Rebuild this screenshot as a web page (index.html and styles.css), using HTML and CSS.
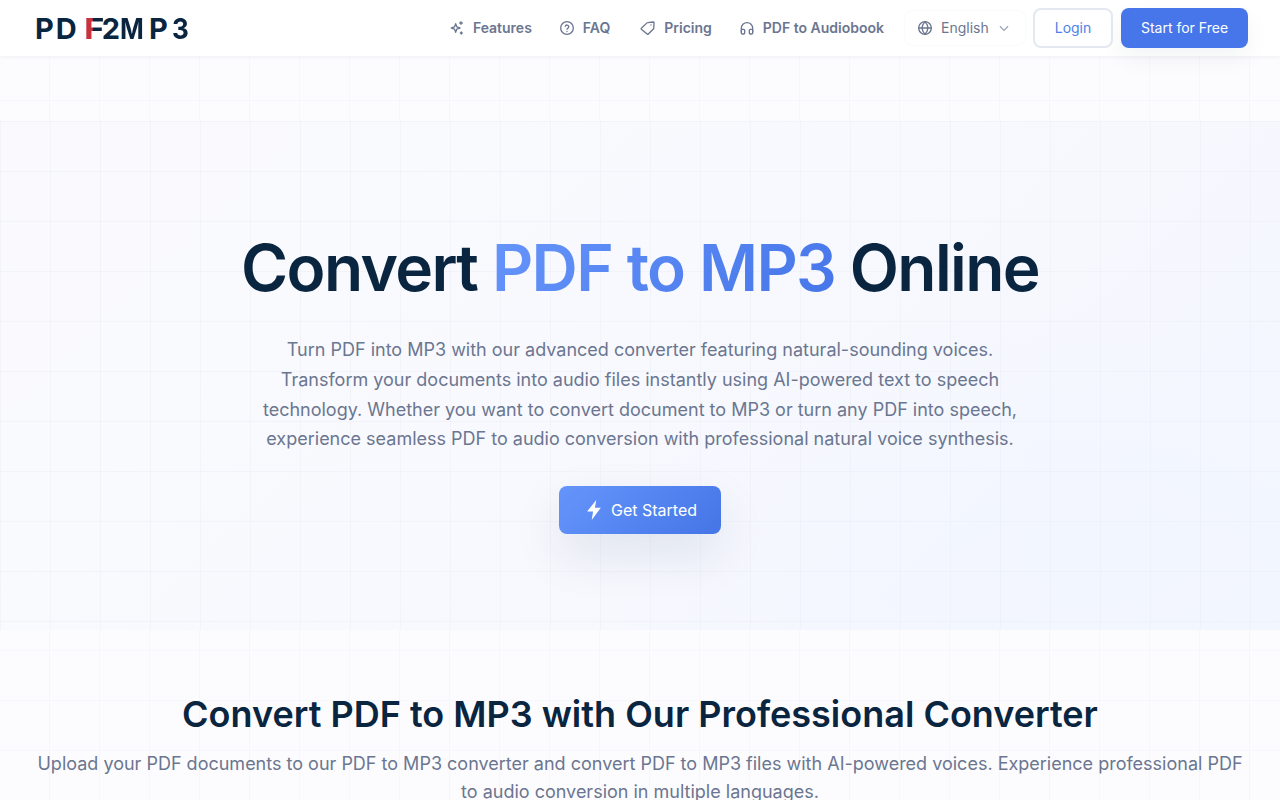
FILE: index.html
```html
<!DOCTYPE html>
<html lang="en">
<head>
  <meta charset="UTF-8" />
  <meta name="viewport" content="width=device-width, initial-scale=1.0"/>
  <title>PDF2MP3</title>
  <link rel="stylesheet" href="styles.css">
</head>
<body>
  <header class="topbar">
    <a class="logo" href="#"><span class="l-p">P</span><span class="l-d">D</span><span class="l-f">F</span><span class="l-2">2</span><span class="l-m">M</span><span class="l-p2">P</span><span class="l-3">3</span></a>
    <nav class="nav">
      <a href="#" class="nav-link">
        <svg viewBox="0 0 24 24" class="icon"><path d="M10 5.500l1.700 4.800 4.800 1.700-4.800 1.700L10 18.500l-1.700-4.800L3.500 12l4.800-1.700z"/><path d="M18 2.500v4M16 4.500h4M18.500 18v3M17 19.500h3"/></svg>
        Features
      </a>
      <a href="#" class="nav-link">
        <svg viewBox="0 0 24 24" class="icon"><circle cx="12" cy="12" r="9.500"/><path d="M9.300 9.300a2.800 2.800 0 0 1 5.400 1c0 1.800-2.700 2.300-2.700 3.700M12 17.200v.1"/></svg>
        FAQ
      </a>
      <a href="#" class="nav-link">
        <svg viewBox="0 0 24 24" class="icon"><path d="M2 12.300L10.500 4.300a1.500 1.500 0 0 1 1-.4L20 3a1 1 0 0 1 1 1l-.4 8.500a1.500 1.500 0 0 1-.5 1L12.500 21a1.300 1.300 0 0 1-1.800 0L2 13.800a1 1 0 0 1 0-1.500z"/><path d="M16.500 7.500v.1"/></svg>
        Pricing
      </a>
      <a href="#" class="nav-link">
        <svg viewBox="0 0 24 24" class="icon"><path d="M3.500 18v-5.500a8.500 8.500 0 0 1 17 0V18"/><rect x="3.500" y="14" width="5" height="7" rx="1.500"/><rect x="15.500" y="14" width="5" height="7" rx="1.500"/></svg>
        PDF to Audiobook
      </a>
      <button class="lang">
        <svg viewBox="0 0 24 24" class="icon"><circle cx="12" cy="12" r="9.500"/><path d="M2.500 12h19M12 2.500c-5.500 6-5.500 13 0 19M12 2.500c5.500 6 5.500 13 0 19"/></svg>
        <span>English</span>
        <svg viewBox="0 0 24 24" class="chev"><path d="M5 9l7 7 7-7"/></svg>
      </button>
      <a href="#" class="btn-login">Login</a>
      <a href="#" class="btn-start">Start for Free</a>
    </nav>
  </header>

  <section class="hero">
    <h1>Convert <span class="grad">PDF to MP3</span> Online</h1>
    <p class="hero-text">Turn PDF into MP3 with our advanced converter featuring natural-sounding voices. Transform your documents into audio files instantly using AI-powered text to speech technology. Whether you want to convert document to MP3 or turn any PDF into speech, experience seamless PDF to audio conversion with professional natural voice synthesis.</p>
    <a href="#" class="btn-get">
      <svg viewBox="0 0 24 24" class="bolt"><path d="M14.500 1L4.500 13.500H11L9.500 23 19.500 9.500H13z"/></svg>
      Get Started
    </a>
  </section>

  <section class="converter">
    <h2>Convert PDF to MP3 with Our Professional Converter</h2>
    <p>Upload your PDF documents to our PDF to MP3 converter and convert PDF to MP3 files with AI-powered voices. Experience professional PDF to audio conversion in multiple languages.</p>
  </section>
</body>
</html>
```

FILE: styles.css
```css
* {
  box-sizing: border-box;
}

body {
  margin: 0;
  font-family: 'Inter', sans-serif;
  color: #0a2540;
  background-color: #fcfcfe;
  background-image:
    linear-gradient(rgba(226, 229, 240, 0.22) 1px, transparent 1px),
    linear-gradient(90deg, rgba(226, 229, 240, 0.22) 1px, transparent 1px);
  background-size: 50px 50px;
  background-position: -1px 0;
}

a {
  text-decoration: none;
  color: inherit;
}

.topbar {
  height: 56px;
  padding: 0 32px 0 35px;
  display: flex;
  align-items: center;
  justify-content: space-between;
  background: #fff;
  box-shadow: 0 1px 4px rgba(10, 37, 64, 0.06);
  position: relative;
  z-index: 2;
}

.logo {
  display: flex;
  font-size: 29px;
  font-weight: 700;
  line-height: 1;
  color: #0a2540;
}

.logo span {
  display: inline-block;
  transform-origin: left center;
}

.l-d { margin-left: 2px; }
.l-f {
  margin-left: 7px;
  background: linear-gradient(90deg, #c8323c 0 7px, #0a2540 7px);
  -webkit-background-clip: text;
  background-clip: text;
  color: transparent;
  transform: scaleX(1.2);
}
.l-2 { margin-left: 1px; }
.logo .l-m { transform: scaleX(0.88); }
.l-p2 { margin-left: 2px; }
.logo .l-3 {
  margin-left: 4px;
  transform: scaleX(0.9);
}

.nav {
  display: flex;
  align-items: center;
  height: 40px;
  line-height: 16px;
}

.nav-link {
  display: flex;
  align-items: center;
  gap: 8px;
  margin-right: 27px;
  padding-bottom: 1px;
  font-size: 14px;
  font-weight: 600;
  color: #6b7690;
}

.nav-link:nth-child(2) { margin-right: 30px; }
.nav-link:nth-child(3) { margin-right: 27px; }
.nav-link:nth-child(4) { margin-right: 21px; }

.icon {
  width: 16px;
  height: 16px;
  fill: none;
  stroke: #6b7690;
  stroke-width: 2;
  stroke-linecap: round;
  stroke-linejoin: round;
}

.lang {
  width: 120px;
  height: 34px;
  margin-right: 8px;
  padding: 0 14px 1px 12px;
  display: flex;
  align-items: center;
  border: none;
  border-radius: 8px;
  background: #fff;
  box-shadow: 0 0 3px rgba(10, 37, 64, 0.05);
  font-family: inherit;
  font-size: 14px;
  color: #6b7690;
}

.lang span {
  margin-left: 8px;
  flex: 1;
  text-align: left;
}

.chev {
  width: 14px;
  height: 14px;
  fill: none;
  stroke: #9aa3b5;
  stroke-width: 2;
}

.btn-login {
  width: 80px;
  height: 40px;
  margin-right: 8px;
  display: flex;
  align-items: center;
  justify-content: center;
  border: 2px solid #e4e8f1;
  border-radius: 8px;
  background: #fff;
  font-size: 14px;
  color: #4f7fea;
}

.btn-start {
  width: 127px;
  height: 40px;
  display: flex;
  align-items: center;
  justify-content: center;
  border-radius: 8px;
  background: #4676ea;
  box-shadow: 0 10px 25px rgba(10, 37, 64, 0.05);
  font-size: 14px;
  color: #fff;
}

.hero {
  height: 574px;
  position: relative;
  display: flex;
  flex-direction: column;
  align-items: center;
  padding-top: 177px;
}

.hero::before {
  content: "";
  position: absolute;
  left: 0;
  right: 0;
  top: 65px;
  bottom: 0;
  background-color: #f8f9fe;
  background-image:
    linear-gradient(rgba(226, 229, 240, 0.28) 1px, transparent 1px),
    linear-gradient(90deg, rgba(226, 229, 240, 0.28) 1px, transparent 1px),
    radial-gradient(ellipse 500px 250px at 85% 85%, #f2f6fe, transparent),
    linear-gradient(135deg, #fafafe 0, #f8f9fe 50%, #f3f6fe 100%);
  background-size: 50px 50px, 50px 50px, auto, auto;
}

.hero > * {
  position: relative;
}

h1 {
  margin: 0;
  font-size: 64px;
  font-weight: 600;
  line-height: 1.1;
  letter-spacing: -1.6px;
  color: #0a2540;
}

.grad {
  background: linear-gradient(135deg, #6695fb, #4575e8);
  -webkit-background-clip: text;
  background-clip: text;
  color: transparent;
}

.hero-text {
  width: 768px;
  margin: 32px 0 0;
  text-align: center;
  font-size: 18px;
  line-height: 29.6px;
  color: #6b7690;
}

.btn-get {
  width: 162px;
  height: 48px;
  margin-top: 32px;
  display: flex;
  align-items: center;
  justify-content: center;
  gap: 6px;
  border-radius: 8px;
  background: linear-gradient(135deg, #6595fb, #4575e6);
  box-shadow: 0 20px 50px rgba(10, 37, 64, 0.1);
  font-size: 16px;
  color: #fff;
}

.bolt {
  width: 22px;
  height: 22px;
  fill: #fff;
}

.converter {
  padding: 63px 32px 0;
  text-align: center;
}

.converter h2 {
  margin: 0;
  font-size: 36px;
  font-weight: 600;
  line-height: 1.2;
  color: #0a2540;
}

.converter p {
  margin: 14px 0 0;
  font-size: 18px;
  line-height: 28px;
  color: #6b7690;
}
```
